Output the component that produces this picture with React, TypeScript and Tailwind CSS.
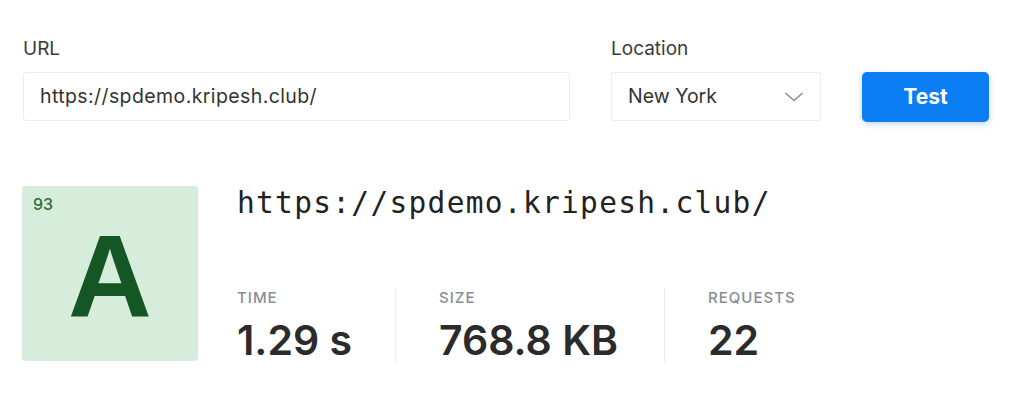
import React from "react";

export default function App() {
  return (
    <div className="w-[1024px] h-[409px] bg-white pl-[23px] pt-[38px] font-['Inter','Liberation_Sans',sans-serif] text-[#333]">
      <div className="flex items-end">
        <div className="w-[547px]">
          <div className="text-[19px] leading-[22px] text-[#3a3a3a]">URL</div>
          <div className="mt-[12px] h-[49px] border border-[#ececec] rounded-[3px] flex items-center pl-[16px] text-[19.5px] tracking-[0.4px] text-[#333]">
            https://spdemo.kripesh.club/
          </div>
        </div>
        <div className="ml-[41px] w-[210px]">
          <div className="text-[19px] leading-[22px] text-[#3a3a3a]">Location</div>
          <div className="mt-[12px] h-[49px] border border-[#ececec] rounded-[3px] flex items-center justify-between pl-[16px] pr-[17px] text-[19.5px] text-[#333]">
            <span>New York</span>
            <svg width="18" height="10" viewBox="0 0 18 10" fill="none">
              <path d="M1 1.5 L9 8.5 L17 1.5" stroke="#8a8a8a" strokeWidth="1.5" strokeLinecap="round" strokeLinejoin="round" />
            </svg>
          </div>
        </div>
        <button className="ml-[41px] mb-[-1px] w-[127px] h-[50px] rounded-[5px] bg-[#0a7ef2] text-white text-[21px] font-bold shadow-[0_2px_6px_rgba(0,90,200,0.25)] flex items-center justify-center">
          Test
        </button>
      </div>

      <div className="mt-[65px] flex">
        <div className="w-[176px] h-[175px] bg-[#d5edda] rounded-[3px] flex flex-col ml-[-1px]">
          <div className="pl-[11px] pt-[9px] text-[16px] leading-[19px] font-medium text-[#2f6b3d]">93</div>
          <div className="flex-1 flex items-center justify-center pb-[22px] text-[116px] leading-[1] font-bold text-[#155724] font-['Liberation_Sans',sans-serif]">
            A
          </div>
        </div>
        <div className="ml-[39px] flex flex-col">
          <div className="font-['DejaVu_Sans_Mono',monospace] text-[29.5px] leading-[34px] tracking-[1.3px] text-[#222]">
            https://spdemo.kripesh.club/
          </div>
          <div className="mt-[68px] flex">
            <div className="w-[158px]">
              <div className="text-[15px] leading-[20px] font-medium tracking-[1px] text-[#868e96]">TIME</div>
              <div className="mt-[10px] text-[41px] leading-[44px] font-semibold text-[#2b2b2b]">1.29 s</div>
            </div>
            <div className="w-[269px] border-l border-[#ececec] pl-[43px]">
              <div className="text-[15px] leading-[20px] font-medium tracking-[1px] text-[#868e96]">SIZE</div>
              <div className="mt-[10px] text-[41px] leading-[44px] font-semibold text-[#2b2b2b]">768.8 KB</div>
            </div>
            <div className="border-l border-[#ececec] pl-[43px]">
              <div className="text-[15px] leading-[20px] font-medium tracking-[1px] text-[#868e96]">REQUESTS</div>
              <div className="mt-[10px] text-[41px] leading-[44px] font-semibold text-[#2b2b2b]">22</div>
            </div>
          </div>
        </div>
      </div>
    </div>
  );
}
